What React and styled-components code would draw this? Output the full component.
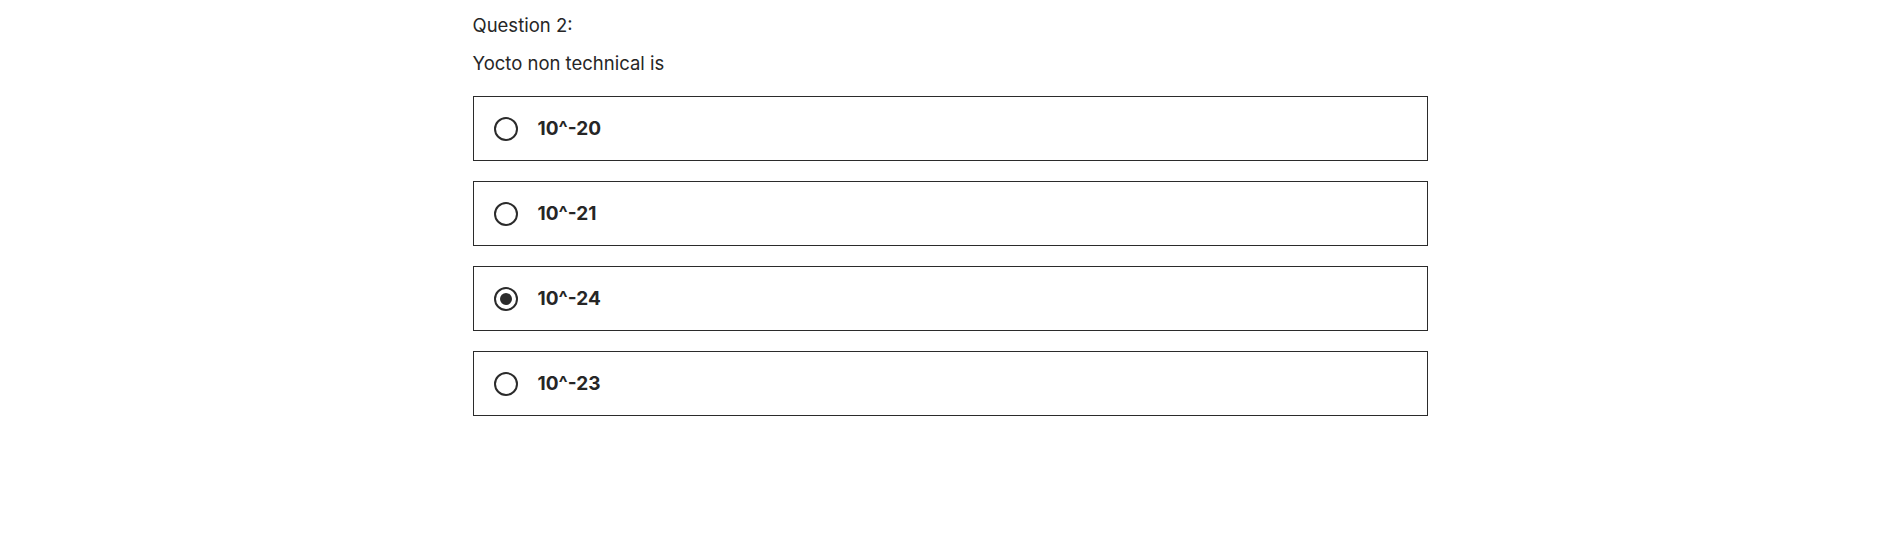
import React, { useState } from 'react'
import styled, { createGlobalStyle } from 'styled-components'

const GlobalStyle = createGlobalStyle`
  body {
    margin: 0;
    background: #fff;
    font-family: Inter, "Liberation Sans", Arial, sans-serif;
    color: #262626;
  }
`

const options = ['10^-20', '10^-21', '10^-24', '10^-23']

export default function App() {
  const [selected, setSelected] = useState(2)

  return (
    <>
      <GlobalStyle />
      <Container>
        <Label>Question 2:</Label>
        <Prompt>Yocto non technical is</Prompt>
        <Options>
          {options.map((opt, i) => (
            <Option key={opt} onClick={() => setSelected(i)}>
              <Radio checked={selected === i} />
              <OptionText>{opt}</OptionText>
            </Option>
          ))}
        </Options>
      </Container>
    </>
  )
}

const Container = styled.div`
  width: 955px;
  margin: 0 auto;
  padding-top: 14px;
`

const Label = styled.div`
  font-size: 18.5px;
  line-height: 22px;
`

const Prompt = styled.div`
  font-size: 18.5px;
  line-height: 22px;
  margin-top: 16px;
`

const Options = styled.div`
  display: flex;
  flex-direction: column;
  gap: 20px;
  margin-top: 22px;
`

const Option = styled.label`
  display: flex;
  align-items: center;
  gap: 20px;
  height: 65px;
  box-sizing: border-box;
  padding: 0 20px;
  border: 1px solid #2b2b2b;
  cursor: pointer;
`

const Radio = styled.span`
  width: 24px;
  height: 24px;
  box-sizing: border-box;
  border-radius: 50%;
  border: 2px solid #2b2b2b;
  display: flex;
  align-items: center;
  justify-content: center;

  &::after {
    content: '';
    width: 12px;
    height: 12px;
    border-radius: 50%;
    background: #2b2b2b;
    display: ${p => (p.checked ? 'block' : 'none')};
  }
`

const OptionText = styled.span`
  font-size: 19px;
  font-weight: 700;
`
